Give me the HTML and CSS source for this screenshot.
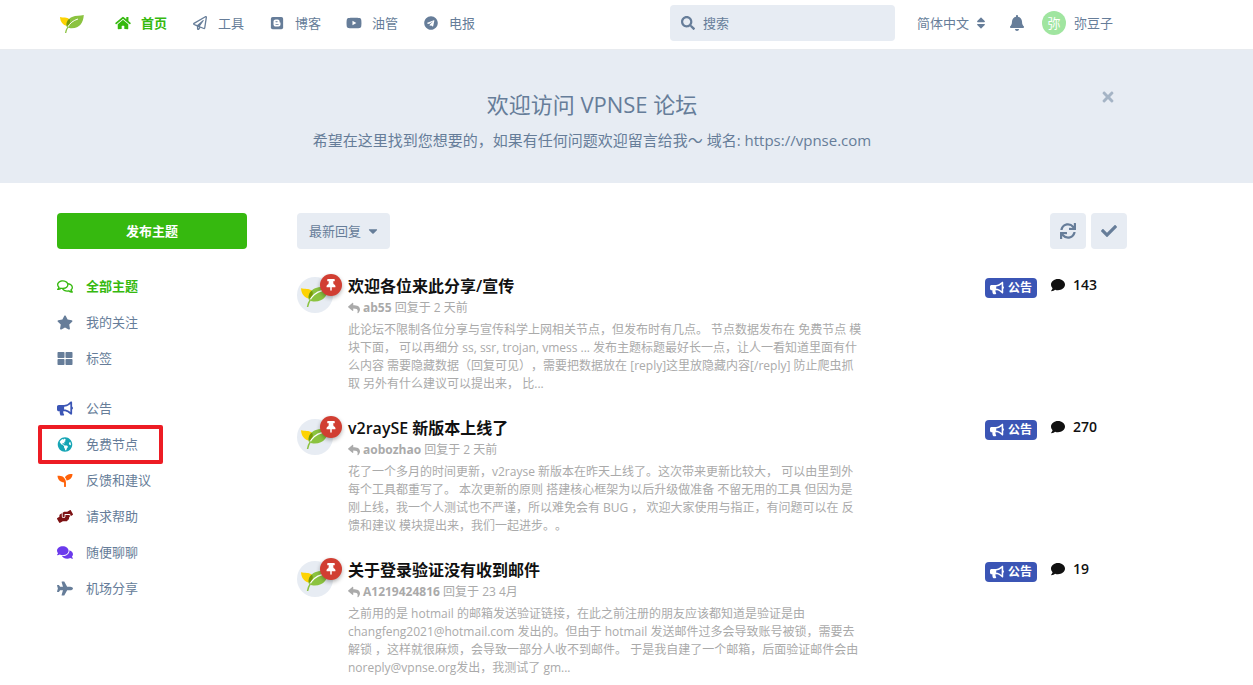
FILE: index.html
```
<!DOCTYPE html>
<html lang="zh-CN">
<head>
    <meta charset="UTF-8">
    <meta name="viewport" content="width=device-width, initial-scale=1.0">
    <title>VPNSE 论坛</title>
    <link rel="stylesheet" href="styles.css">
</head>
<body>
    <!-- Icon sprite -->
    <svg class="sprite" aria-hidden="true">
        <symbol id="leaf" viewBox="0 0 24 18">
            <path fill="#fdd303" d="M0 2C3 3 7 1.600 9.500 4.500L9 9L7 10.800C3 10.300.3 7 0 2z"/>
            <path fill="#8bc340" d="M23.800 0C23.300 8 19.500 13.800 10.500 13.200C9 13.100 7.800 12.700 6.800 12C5.600 8.500 7.600 3.800 12 1.900C16 .3 20 .8 23.800 0z"/>
            <path fill="#7a9a06" d="M6.800 11C6 8.500 7 5.500 9.300 3.800C10.600 5.500 10.300 8.500 8.500 10z"/>
            <path fill="none" stroke="#fff" stroke-width="1" d="M18 4C13.500 5.300 9.500 8.300 7.600 12.500"/>
            <path fill="none" stroke="#8bc340" stroke-width="1.300" d="M8.200 11.500C7 13.300 6 15.500 5.600 18"/>
        </symbol>
        <symbol id="home" viewBox="0 0 576 512"><path d="M280.37 148.26L96 300.11V464a16 16 0 0 0 16 16l112.06-.29a16 16 0 0 0 15.92-16V368a16 16 0 0 1 16-16h64a16 16 0 0 1 16 16v95.64a16 16 0 0 0 16 16.05L464 480a16 16 0 0 0 16-16V300L295.67 148.26a12.19 12.19 0 0 0-15.3 0zM571.6 251.47L488 182.56V44.05a12 12 0 0 0-12-12h-56a12 12 0 0 0-12 12v72.61L318.47 43a48 48 0 0 0-61 0L4.34 251.47a12 12 0 0 0-1.6 16.9l25.5 31A12 12 0 0 0 45.15 301l235.22-193.74a12.19 12.19 0 0 1 15.3 0L530.9 301a12 12 0 0 0 16.9-1.6l25.5-31a12 12 0 0 0-1.7-16.93z"/></symbol>
        <symbol id="paper-plane" viewBox="0 0 512 512"><path d="M440 6.5L24 246.4c-34.4 19.9-31.1 70.8 5.7 85.9L144 379.6V464c0 46.4 59.2 65.5 86.6 28.6l43.8-59.1 111.9 46.2c5.9 2.4 12.1 3.6 18.3 3.6 8.2 0 16.3-2.1 23.6-6.2 12.8-7.2 21.6-20 23.9-34.5l59.4-387.2c6.1-40.1-36.9-68.8-71.5-48.9zM192 464v-64.6l36.6 15.1L192 464zm212.6-28.7l-153.8-63.5L391 169.5c10.7-15.5-9.5-33.5-23.7-21.2L155.8 332.6 48 288 464 48l-59.4 387.3z"/></symbol>
        <symbol id="blogger" viewBox="0 0 448 512">
            <rect y="32" width="448" height="448" rx="64"/>
            <path fill="#fff" fill-rule="evenodd" d="M180 128h64c46 0 76 32 76 76v14c0 14 8 18 18 18s14 6 14 16v58c0 42-30 74-74 74H178c-46 0-82-32-82-76V204c0-44 36-76 84-76zm4 60c-26 0-26 36 0 36h48c26 0 26-36 0-36zm0 100c-26 0-26 36 0 36h84c26 0 26-36 0-36z"/>
        </symbol>
        <symbol id="youtube" viewBox="0 0 576 512"><path d="M549.655 124.083c-6.281-23.65-24.787-42.276-48.284-48.597C458.781 64 288 64 288 64S117.22 64 74.629 75.486c-23.497 6.322-42.003 24.947-48.284 48.597-11.412 42.867-11.412 132.305-11.412 132.305s0 89.438 11.412 132.305c6.281 23.65 24.787 41.5 48.284 47.821C117.22 448 288 448 288 448s170.78 0 213.371-11.486c23.497-6.321 42.003-24.171 48.284-47.821 11.412-42.867 11.412-132.305 11.412-132.305s0-89.438-11.412-132.305zm-317.51 213.508V175.185l142.739 81.205-142.739 81.201z"/></symbol>
        <symbol id="telegram" viewBox="0 0 496 512"><path d="M248 8C111 8 0 119 0 256s111 248 248 248 248-111 248-248S385 8 248 8zm121.8 169.9l-40.7 191.8c-3 13.6-11.1 16.9-22.4 10.5l-62-45.7-29.9 28.8c-3.3 3.3-6.1 6.1-12.5 6.1l4.4-63.1 114.9-103.8c5-4.4-1.1-6.9-7.7-2.5l-142 89.4-61.2-19.1c-13.3-4.2-13.6-13.3 2.8-19.7l239.1-92.2c11.1-4 20.8 2.7 17.2 19.5z"/></symbol>
        <symbol id="magnifier" viewBox="0 0 512 512"><path d="M505 442.7L405.3 343c-4.5-4.5-10.6-7-17-7H372c27.6-35.3 44-79.7 44-128C416 93.1 322.9 0 208 0S0 93.1 0 208s93.1 208 208 208c48.3 0 92.7-16.4 128-44v16.3c0 6.4 2.5 12.5 7 17l99.7 99.7c9.4 9.4 24.6 9.4 33.9 0l28.3-28.3c9.4-9.4 9.4-24.6.1-34zM208 336c-70.7 0-128-57.2-128-128 0-70.7 57.2-128 128-128 70.7 0 128 57.2 128 128 0 70.7-57.2 128-128 128z"/></symbol>
        <symbol id="sort" viewBox="0 0 320 512"><path d="M41 288h238c21.4 0 32.1 25.9 17 41L177 448c-9.4 9.4-24.6 9.4-33.9 0L24 329c-15.1-15.1-4.4-41 17-41zm255-105L177 64c-9.4-9.4-24.6-9.4-33.9 0L24 183c-15.1 15.1-4.4 41 17 41h238c21.4 0 32.1-25.9 17-41z"/></symbol>
        <symbol id="caret" viewBox="0 0 320 512"><path d="M31.3 192h257.3c17.8 0 26.7 21.5 14.1 34.1L174.1 354.8c-7.8 7.8-20.5 7.8-28.3 0L17.2 226.1C4.6 213.5 13.5 192 31.3 192z"/></symbol>
        <symbol id="bell" viewBox="0 0 448 512"><path d="M224 512c35.32 0 63.97-28.65 63.97-64H160.03c0 35.35 28.65 64 63.97 64zm215.39-149.71c-19.32-20.76-55.47-51.99-55.47-154.29 0-77.7-54.48-139.9-127.94-155.16V32c0-17.67-14.32-32-31.98-32s-31.98 14.33-31.98 32v20.84C118.56 68.1 64.08 130.3 64.08 208c0 102.3-36.15 133.53-55.47 154.29-6 6.45-8.66 14.16-8.61 21.71.11 16.4 12.98 32 32.1 32h383.8c19.12 0 32-15.6 32.1-32 .05-7.55-2.61-15.27-8.61-21.71z"/></symbol>
        <symbol id="times" viewBox="0 0 352 512"><path d="M242.72 256l100.07-100.07c12.28-12.28 12.28-32.19 0-44.48l-22.24-22.24c-12.28-12.28-32.19-12.28-44.48 0L176 189.28 75.93 89.21c-12.28-12.28-32.19-12.28-44.48 0L9.21 111.45c-12.28 12.28-12.28 32.19 0 44.48L109.28 256 9.21 356.07c-12.28 12.28-12.28 32.19 0 44.48l22.24 22.24c12.28 12.28 32.2 12.28 44.48 0L176 322.72l100.07 100.07c12.28 12.28 32.2 12.28 44.48 0l22.24-22.24c12.28-12.28 12.28-32.19 0-44.48L242.72 256z"/></symbol>
        <symbol id="comments-o" viewBox="0 0 576 512"><path d="M532 386.2c27.5-27.1 44-61.1 44-98.2 0-80-76.5-146.1-176.2-157.9C368.3 72.5 294.3 32 208 32 93.1 32 0 103.6 0 192c0 37 16.5 71 44 98.2-15.3 30.7-37.3 54.5-37.7 54.9-6.3 6.7-8.1 16.5-4.4 25 3.6 8.5 12 14 21.2 14 53.5 0 96.7-20.2 125.2-38.8 9.2 2.1 18.7 3.7 28.4 4.9C208.1 407.6 281.8 448 368 448c20.8 0 40.8-2.4 59.8-6.8C456.3 459.7 499.4 480 553 480c9.2 0 17.5-5.5 21.2-14 3.6-8.5 1.9-18.3-4.4-25-.4-.3-22.5-24.1-37.8-54.8zm-392.8-92.3L122.1 305c-14.1 9.1-28.5 16.3-43.1 21.4 2.7-4.7 5.4-9.7 8-14.8l15.5-31.1L77.7 256C64.2 242.6 48 220.7 48 192c0-60.7 73.3-112 160-112s160 51.3 160 112-73.3 112-160 112c-16.5 0-33-1.9-49-5.6l-19.8-4.5zM498.3 352l-24.7 24.4 15.5 31.1c2.6 5.1 5.3 10.1 8 14.8-14.6-5.1-29-12.3-43.1-21.4l-17.1-11.1-19.9 4.6c-16 3.7-32.5 5.6-49 5.6-54 0-102.2-20.1-131.3-49.7C338 339.5 416 272.9 416 192c0-3.4-.4-6.7-.7-10C479.7 196.5 528 238.8 528 288c0 28.7-16.2 50.6-29.7 64z"/></symbol>
        <symbol id="comments" viewBox="0 0 576 512"><path d="M416 192c0-88.4-93.1-160-208-160S0 103.6 0 192c0 34.3 14.1 65.9 38 92-13.4 30.2-35.5 54.2-35.8 54.5-2.2 2.3-2.8 5.7-1.5 8.7S4.8 352 8 352c36.6 0 66.9-12.3 88.7-25 32.2 15.7 70.3 25 111.3 25 114.9 0 208-71.6 208-160zm122 220c23.9-26 38-57.7 38-92 0-66.9-53.5-124.2-129.3-148.1.9 6.6 1.3 13.3 1.3 20.1 0 105.9-107.7 192-240 192-10.8 0-21.3-.8-31.7-1.9C207.8 439.6 281.8 480 368 480c41 0 79.1-9.2 111.3-25 21.8 12.7 52.1 25 88.7 25 3.2 0 6.1-1.9 7.3-4.8 1.3-2.9.7-6.3-1.5-8.7-.3-.3-22.4-24.2-35.8-54.5z"/></symbol>
        <symbol id="star" viewBox="0 0 576 512"><path d="M259.3 17.8L194 150.2 47.900 171.500c-26.200 3.800-36.700 36.100-17.700 54.600l105.700 103-25 145.500c-4.500 26.300 23.200 46 46.400 33.700L288 439.600l130.700 68.700c23.200 12.200 50.900-7.400 46.400-33.700l-25-145.500 105.700-103c19-18.500 8.500-50.800-17.700-54.600L382 150.200 316.700 17.800c-11.700-23.600-45.600-23.900-57.400 0z"/></symbol>
        <symbol id="th-large" viewBox="0 0 512 512"><path d="M296 32h192c13.255 0 24 10.745 24 24v160c0 13.255-10.745 24-24 24H296c-13.255 0-24-10.745-24-24V56c0-13.255 10.745-24 24-24zm-80 0H24C10.745 32 0 42.745 0 56v160c0 13.255 10.745 24 24 24h192c13.255 0 24-10.745 24-24V56c0-13.255-10.745-24-24-24zM0 296v160c0 13.255 10.745 24 24 24h192c13.255 0 24-10.745 24-24V296c0-13.255-10.745-24-24-24H24c-13.255 0-24 10.745-24 24zm296 184h192c13.255 0 24-10.745 24-24V296c0-13.255-10.745-24-24-24H296c-13.255 0-24 10.745-24 24v160c0 13.255 10.745 24 24 24z"/></symbol>
        <symbol id="bullhorn" viewBox="0 0 576 512"><path d="M576 240c0-23.63-12.95-44.04-32-55.12V32.01C544 23.26 537.02 0 512 0c-7.12 0-14.19 2.38-19.98 7.02l-85.03 68.03C364.28 109.19 310.66 128 256 128H64c-35.35 0-64 28.65-64 64v96c0 35.35 28.65 64 64 64h33.7c-1.39 10.48-2.18 21.14-2.18 32 0 39.77 9.26 77.35 25.56 110.94 5.19 10.69 16.52 17.06 28.4 17.06h74.28c26.05 0 41.69-29.84 25.9-50.56-16.4-21.52-26.15-48.36-26.15-77.44 0-11.11 1.62-21.79 4.41-32H256c54.66 0 108.28 18.81 150.98 52.95l85.03 68.03a32.023 32.023 0 0 0 19.98 7.02c24.92 0 32-22.78 32-32V295.13C563.05 284.04 576 263.63 576 240zm-96 141.42l-33.05-26.44C392.95 311.78 325.12 288 256 288v-96c69.12 0 136.95-23.78 190.95-66.98L480 98.58v282.84z"/></symbol>
        <symbol id="globe" viewBox="0 0 496 512"><path d="M248 8C111.03 8 0 119.03 0 256s111.03 248 248 248 248-111.03 248-248S384.97 8 248 8zm82.29 357.6c-3.9 3.88-7.99 7.95-11.31 11.28-2.99 3-5.1 6.7-6.17 10.71-1.51 5.66-2.73 11.38-4.77 16.87l-17.39 46.85c-13.76 3-28 4.69-42.65 4.69v-27.38c1.69-12.62-7.64-36.26-22.63-51.25-6-6-9.37-14.14-9.37-22.63v-32.01c0-11.64-6.27-22.34-16.46-27.97-14.37-7.95-34.81-19.06-48.81-26.11-11.48-5.78-22.1-13.14-31.65-21.75l-.8-.72a114.792 114.792 0 0 1-18.06-20.74c-9.38-13.77-24.66-36.42-34.59-51.14 20.47-45.5 57.36-82.04 103.2-101.89l24.01 12.01C203.48 89.74 216 82.01 216 70.11v-11.3c7.99-1.29 16.12-2.11 24.39-2.42l28.3 28.3c6.25 6.25 6.25 16.38 0 22.63L264 112l-10.34 10.34c-3.12 3.12-3.12 8.19 0 11.31l4.69 4.69c3.12 3.12 3.12 8.19 0 11.31l-8 8a8.008 8.008 0 0 1-5.66 2.34h-8.99c-2.08 0-4.08.81-5.58 2.27l-9.92 9.65a8.001 8.001 0 0 0-1.58 9.31l15.59 31.19c2.66 5.32-1.21 11.58-7.15 11.58h-5.64c-1.93 0-3.79-.7-5.24-1.96l-9.28-8.06a16.017 16.017 0 0 0-15.55-3.1l-31.17 10.39a11.95 11.95 0 0 0-8.17 11.34c0 4.53 2.56 8.66 6.61 10.69l11.08 5.54c9.41 4.71 19.79 7.16 30.31 7.16s22.59 27.29 32 32h66.75c8.49 0 16.62 3.37 22.63 9.37l13.69 13.69a30.503 30.503 0 0 1 8.93 21.57 46.536 46.536 0 0 1-13.72 32.98zM417 274.25c-5.79-1.45-10.84-5-14.15-9.97l-17.98-26.97a23.97 23.97 0 0 1 0-26.62l19.59-29.38c2.32-3.47 5.5-6.29 9.24-8.15l12.98-6.49C440.2 193.59 448 223.87 448 256c0 8.67-.74 17.16-1.82 25.54L417 274.25z"/></symbol>
        <symbol id="seedling" viewBox="0 0 512 512"><path d="M64 96H0c0 123.7 100.3 224 224 224v144c0 8.8 7.2 16 16 16h32c8.8 0 16-7.2 16-16V320C288 196.3 187.7 96 64 96zm384-64c-84.2 0-157.4 46.5-195.7 115.2 27.7 30.2 48.2 66.9 59 107.6C424 243.1 512 147.9 512 32h-64z"/></symbol>
        <symbol id="hands" viewBox="0 0 640 512"><path d="M488 192H336v56c0 39.7-32.3 72-72 72s-72-32.3-72-72V126.4l-64.9 39C107.8 176.9 96 197.8 96 220.2v47.3l-80 46.2C.7 322.5-4.6 342.1 4.3 357.4l80 138.6c8.8 15.3 28.4 20.5 43.7 11.7L231.4 448H368c35.3 0 64-28.7 64-64h16c17.7 0 32-14.3 32-32v-64h8c13.3 0 24-10.7 24-24v-48c0-13.3-10.7-24-24-24zm147.7-37.4L555.7 16C546.9.7 527.3-4.5 512 4.3L408.6 64H306.4c-12 0-23.7 3.4-33.9 9.7L239 94.6c-9.4 5.8-15 16.1-15 27.1V248c0 22.1 17.9 40 40 40s40-17.900 40-40v-88h184c30.900 0 56 25.100 56 56v28.500l80-46.200c15.300-8.900 20.500-28.400 11.700-43.700z"/></symbol>
        <symbol id="plane" viewBox="0 0 576 512"><path d="M480 192H365.71L260.61 8.06A16.014 16.014 0 0 0 246.71 0h-65.5c-10.63 0-18.3 10.17-15.38 20.39L214.86 192H112l-43.2-57.6c-3.02-4.03-7.77-6.4-12.8-6.4H16.01C5.6 128-2.04 137.78.49 147.88L32 256 .49 364.12C-2.04 374.22 5.6 384 16.01 384H56c5.04 0 9.78-2.37 12.8-6.4L112 320h102.86l-49.03 171.6c-2.92 10.22 4.75 20.4 15.38 20.4h65.5c5.74 0 11.04-3.08 13.89-8.06L365.71 320H480c35.35 0 96-28.65 96-64s-60.65-64-96-64z"/></symbol>
        <symbol id="thumbtack" viewBox="0 0 384 512"><path d="M298.028 214.267L285.793 96H328c13.255 0 24-10.745 24-24V24c0-13.255-10.745-24-24-24H56C42.745 0 32 10.745 32 24v48c0 13.255 10.745 24 24 24h42.207L85.972 214.267C37.465 236.82 0 277.261 0 328c0 13.255 10.745 24 24 24h136v104.007c0 1.242.289 2.467.845 3.578l24 48c2.941 5.882 11.364 5.893 14.311 0l24-48a8.008 8.008 0 0 0 .845-3.578V352h136c13.255 0 24-10.745 24-24-.001-51.183-37.983-91.42-85.973-113.733z"/></symbol>
        <symbol id="reply" viewBox="0 0 512 512"><path d="M8.309 189.836L184.313 37.851C199.719 24.546 224 35.347 224 56.015v80.053c160.629 1.839 288 34.032 288 186.258 0 61.441-39.581 122.309-83.333 154.132-13.653 9.931-33.111-2.533-28.077-18.631 45.344-145.012-21.507-183.51-176.59-185.742V360c0 20.7-24.3 31.453-39.687 18.164l-176.004-152c-11.071-9.562-11.086-26.753 0-36.328z"/></symbol>
        <symbol id="comment" viewBox="0 0 512 512"><path d="M256 32C114.6 32 0 125.1 0 240c0 49.6 21.4 95 57 130.7C44.5 421.1 2.7 466 2.2 466.5c-2.2 2.3-2.8 5.7-1.5 8.7S4.8 480 8 480c66.3 0 116-31.8 140.6-51.4 32.7 12.3 69 19.4 107.4 19.4 141.4 0 256-93.1 256-208S397.4 32 256 32z"/></symbol>
        <symbol id="check" viewBox="0 0 512 512"><path d="M173.898 439.404l-166.4-166.4c-9.997-9.997-9.997-26.206 0-36.204l36.203-36.204c9.997-9.998 26.207-9.998 36.204 0L192 312.69 432.095 72.596c9.997-9.997 26.207-9.997 36.204 0l36.203 36.204c9.997 9.997 9.997 26.206 0 36.204l-294.4 294.401c-9.998 9.997-26.207 9.997-36.204-.001z"/></symbol>
        <symbol id="sync" viewBox="0 0 512 512"><path d="M440.65 12.57l4 82.77A247.16 247.16 0 0 0 255.83 8C134.73 8 33.91 94.92 12.29 209.82A12 12 0 0 0 24.09 224h49.05a12 12 0 0 0 11.67-9.26 175.91 175.91 0 0 1 317-56.94l-101.46-4.86a12 12 0 0 0-12.57 12v47.41a12 12 0 0 0 12 12H500a12 12 0 0 0 12-12V12a12 12 0 0 0-12-12h-47.37a12 12 0 0 0-11.98 12.57zM255.83 432a175.61 175.61 0 0 1-146-77.8l101.8 4.87a12 12 0 0 0 12.57-12v-47.4a12 12 0 0 0-12-12H12a12 12 0 0 0-12 12V500a12 12 0 0 0 12 12h47.35a12 12 0 0 0 12-12.6l-4.15-82.57A247.17 247.17 0 0 0 255.83 504c121.11 0 221.93-86.92 243.55-201.82a12 12 0 0 0-11.8-14.18h-49.05a12 12 0 0 0-11.67 9.26A175.86 175.86 0 0 1 255.83 432z"/></symbol>
    </svg>

    <header class="header container">
        <a href="#" class="logo" aria-label="VPNSE"><svg><use href="#leaf"/></svg></a>
        <nav class="header-nav">
            <a href="#" class="active"><svg class="icon"><use href="#home"/></svg>首页</a>
            <a href="#"><svg class="icon"><use href="#paper-plane"/></svg>工具</a>
            <a href="#"><svg class="icon"><use href="#blogger"/></svg>博客</a>
            <a href="#"><svg class="icon"><use href="#youtube"/></svg>油管</a>
            <a href="#"><svg class="icon"><use href="#telegram"/></svg>电报</a>
        </nav>
        <div class="header-controls">
            <div class="search">
                <svg class="icon"><use href="#magnifier"/></svg>
                <input type="search" placeholder="搜索" aria-label="搜索">
            </div>
            <button class="language">简体中文 <svg class="icon"><use href="#sort"/></svg></button>
            <button class="bell" aria-label="通知"><svg class="icon"><use href="#bell"/></svg></button>
            <button class="user"><span class="user-avatar">弥</span>弥豆子</button>
        </div>
    </header>

    <section class="hero">
        <div class="container hero-inner">
            <h2>欢迎访问 VPNSE 论坛</h2>
            <p>希望在这里找到您想要的，如果有任何问题欢迎留言给我～ 域名: https://vpnse.com</p>
            <button class="hero-close" aria-label="关闭"><svg class="icon"><use href="#times"/></svg></button>
        </div>
    </section>

    <div class="container page">
        <aside class="sidebar">
            <button class="new-topic">发布主题</button>
            <nav class="side-nav">
                <a href="#" class="active"><svg class="icon"><use href="#comments-o"/></svg>全部主题</a>
                <a href="#"><svg class="icon"><use href="#star"/></svg>我的关注</a>
                <a href="#"><svg class="icon"><use href="#th-large"/></svg>标签</a>
            </nav>
            <nav class="side-nav">
                <a href="#"><svg class="icon blue"><use href="#bullhorn"/></svg>公告</a>
                <a href="#" class="marked"><svg class="icon teal"><use href="#globe"/></svg>免费节点</a>
                <a href="#"><svg class="icon orange"><use href="#seedling"/></svg>反馈和建议</a>
                <a href="#"><svg class="icon maroon"><use href="#hands"/></svg>请求帮助</a>
                <a href="#"><svg class="icon purple"><use href="#comments"/></svg>随便聊聊</a>
                <a href="#"><svg class="icon"><use href="#plane"/></svg>机场分享</a>
            </nav>
        </aside>

        <main class="content">
            <div class="toolbar">
                <button class="sort-btn">最新回复 <svg class="icon"><use href="#caret"/></svg></button>
                <div class="toolbar-actions">
                    <button class="icon-btn" aria-label="刷新"><svg class="icon"><use href="#sync"/></svg></button>
                    <button class="icon-btn" aria-label="全部标为已读"><svg class="icon"><use href="#check"/></svg></button>
                </div>
            </div>

            <ul class="topics">
                <li class="topic">
                    <a href="#" class="avatar" aria-label="VPNSE"><svg class="avatar-leaf"><use href="#leaf"/></svg><span class="pin"><svg class="icon"><use href="#thumbtack"/></svg></span></a>
                    <div class="topic-main">
                        <h3><a href="#">欢迎各位来此分享/宣传</a></h3>
                        <div class="topic-info"><svg class="icon"><use href="#reply"/></svg><b>ab55</b> 回复于 2 天前</div>
                        <p>此论坛不限制各位分享与宣传科学上网相关节点，但发布时有几点。 节点数据发布在 免费节点 模<br>块下面， 可以再细分 ss, ssr, trojan, vmess ... 发布主题标题最好长一点，让人一看知道里面有什<br>么内容 需要隐藏数据（回复可见），需要把数据放在 [reply]这里放隐藏内容[/reply] 防止爬虫抓<br>取 另外有什么建议可以提出来， 比...</p>
                    </div>
                    <a href="#" class="tag"><svg class="icon"><use href="#bullhorn"/></svg>公告</a>
                    <span class="count"><svg class="icon"><use href="#comment"/></svg>143</span>
                </li>
                <li class="topic">
                    <a href="#" class="avatar" aria-label="VPNSE"><svg class="avatar-leaf"><use href="#leaf"/></svg><span class="pin"><svg class="icon"><use href="#thumbtack"/></svg></span></a>
                    <div class="topic-main">
                        <h3><a href="#">v2raySE 新版本上线了</a></h3>
                        <div class="topic-info"><svg class="icon"><use href="#reply"/></svg><b>aobozhao</b> 回复于 2 天前</div>
                        <p>花了一个多月的时间更新，v2rayse 新版本在昨天上线了。这次带来更新比较大， 可以由里到外<br>每个工具都重写了。 本次更新的原则 搭建核心框架为以后升级做准备 不留无用的工具 但因为是<br>刚上线，我一个人测试也不严谨，所以难免会有 BUG ， 欢迎大家使用与指正，有问题可以在 反<br>馈和建议 模块提出来，我们一起进步。。</p>
                    </div>
                    <a href="#" class="tag"><svg class="icon"><use href="#bullhorn"/></svg>公告</a>
                    <span class="count"><svg class="icon"><use href="#comment"/></svg>270</span>
                </li>
                <li class="topic">
                    <a href="#" class="avatar" aria-label="VPNSE"><svg class="avatar-leaf"><use href="#leaf"/></svg><span class="pin"><svg class="icon"><use href="#thumbtack"/></svg></span></a>
                    <div class="topic-main">
                        <h3><a href="#">关于登录验证没有收到邮件</a></h3>
                        <div class="topic-info"><svg class="icon"><use href="#reply"/></svg><b>A1219424816</b> 回复于 23 4月</div>
                        <p>之前用的是 hotmail 的邮箱发送验证链接，在此之前注册的朋友应该都知道是验证是由<br>changfeng2021@hotmail.com 发出的。但由于 hotmail 发送邮件过多会导致账号被锁，需要去<br>解锁 ，这样就很麻烦，会导致一部分人收不到邮件。 于是我自建了一个邮箱，后面验证邮件会由<br>noreply@vpnse.org发出，我测试了 gm...</p>
                    </div>
                    <a href="#" class="tag"><svg class="icon"><use href="#bullhorn"/></svg>公告</a>
                    <span class="count"><svg class="icon"><use href="#comment"/></svg>19</span>
                </li>
            </ul>
        </main>
    </div>
</body>
</html>
```
FILE: styles.css
```
*,
*::after {
    box-sizing: border-box;
}

body {
    margin: 0;
    font-family: "Open Sans", "Noto Sans CJK SC", sans-serif;
    font-size: 13px;
    line-height: 20px;
    text-spacing-trim: space-all;
    color: #667d99;
    background-color: #fff;
}

a {
    color: inherit;
    text-decoration: none;
}

button {
    display: flex;
    align-items: center;
    padding: 0;
    border: none;
    background: none;
    color: inherit;
    font: inherit;
    cursor: pointer;
}

.sprite {
    display: none;
}

.icon {
    flex: none;
    width: 16px;
    height: 14px;
    fill: currentColor;
}

.container {
    padding-left: 57px;
    padding-right: 126px;
}

/* Header */
.header {
    display: flex;
    align-items: center;
    height: 50px;
    padding-bottom: 4px;
    border-bottom: 1px solid #e8ebef;
}

.logo {
    margin: 2px 31px 0 3px;
}

.logo svg {
    display: block;
    width: 24px;
    height: 18px;
}

.header-nav {
    display: flex;
    gap: 25px;
}

.header-nav a {
    display: flex;
    align-items: center;
    gap: 10px;
}

.active {
    color: #36b90f;
    font-weight: bold;
}

.header-controls {
    display: flex;
    align-items: center;
    margin-left: auto;
    padding-right: 14px;
}

.search {
    display: flex;
    align-items: center;
    gap: 7px;
    width: 225px;
    height: 36px;
    margin-right: 22px;
    padding: 0 10px;
    border-radius: 4px;
    background-color: #e7ecf3;
}

.search input {
    flex: 1;
    min-width: 0;
    padding: 0;
    border: none;
    outline: none;
    background: none;
    color: inherit;
    font: inherit;
}

.search input::placeholder {
    color: #667d99;
    opacity: 1;
}

.language {
    gap: 4px;
    margin-right: 20px;
}

.bell {
    margin-right: 17px;
}

.bell .icon {
    height: 16px;
}

.user {
    gap: 8px;
}

.user-avatar {
    width: 24px;
    height: 24px;
    border-radius: 50%;
    background-color: #a0e5a0;
    color: #fff;
    line-height: 24px;
    text-align: center;
}

/* Welcome banner */
.hero {
    background-color: #e7ecf3;
    text-align: center;
}

.hero-inner {
    position: relative;
    padding-top: 38px;
    padding-bottom: 31px;
}

.hero h2 {
    margin: 0 0 8px;
    font-size: 22px;
    font-weight: normal;
    line-height: 32px;
}

.hero p {
    margin: 0;
    font-size: 15px;
    line-height: 24px;
}

.hero-close {
    position: absolute;
    top: 39px;
    right: 137px;
    opacity: 0.5;
}

.hero-close .icon {
    height: 16px;
}

/* Page */
.page {
    display: flex;
    gap: 50px;
    padding-top: 30px;
}

.sidebar {
    flex: none;
    width: 190px;
}

.new-topic {
    justify-content: center;
    width: 100%;
    height: 36px;
    margin-bottom: 19px;
    border-radius: 4px;
    background-color: #36b90f;
    color: #fff;
    font-weight: bold;
}

.side-nav {
    margin-bottom: 14px;
}

.side-nav a {
    position: relative;
    display: flex;
    align-items: center;
    gap: 13px;
    height: 36px;
}

.side-nav .icon {
    height: 15px;
}

/* Red frame round the highlighted entry */
.marked::after {
    content: "";
    position: absolute;
    top: -1px;
    left: -19px;
    width: 125px;
    height: 39px;
    border: 4px solid #ed1c24;
    border-radius: 2px;
}

.blue {
    color: #3b55b5;
}

.teal {
    color: #16a5b5;
}

.orange {
    color: #ff6108;
}

.maroon {
    color: #7d1214;
}

.purple {
    color: #6b3aec;
}

.content {
    flex: 1;
    min-width: 0;
}

.toolbar {
    display: flex;
    justify-content: space-between;
    margin-bottom: 25px;
}

.toolbar-actions {
    display: flex;
    gap: 5px;
}

.sort-btn,
.icon-btn {
    height: 36px;
    border-radius: 4px;
    background-color: #e7ecf3;
}

.sort-btn {
    gap: 4px;
    padding: 0 9px 0 12px;
}

.icon-btn {
    justify-content: center;
    width: 36px;
}

.icon-btn .icon {
    height: 16px;
}

/* Topic list */
.topics {
    margin: 0;
    padding: 0;
    list-style: none;
}

.topic {
    display: flex;
    align-items: flex-start;
    margin-bottom: 23px;
}

.avatar {
    position: relative;
    display: flex;
    align-items: center;
    justify-content: center;
    flex: none;
    width: 36px;
    height: 36px;
    margin: 3px 15px 0 0;
    padding-top: 3px;
    border-radius: 50%;
    background-color: #e7ecf3;
}

.avatar-leaf {
    width: 28px;
    height: 21px;
}

.pin {
    position: absolute;
    top: -3px;
    right: -9px;
    display: flex;
    align-items: center;
    justify-content: center;
    width: 22px;
    height: 22px;
    border-radius: 50%;
    background-color: #d13e32;
    box-shadow: 0 2px 4px rgba(0, 0, 0, 0.3);
    color: #fff;
}

.pin .icon {
    height: 12px;
}

.topic-main {
    flex: 1;
    min-width: 0;
    color: #aaa;
    font-size: 12px;
    line-height: 18px;
    white-space: nowrap;
}

.topic-main h3 {
    margin: 0 0 1px;
    color: #111;
    font-size: 16px;
    font-weight: 600;
    line-height: 24px;
}

.topic-info .icon {
    width: 12px;
    height: 12px;
    margin-right: 3px;
    vertical-align: -2px;
}

.topic-main p {
    margin: 4px 0 0;
}

.tag {
    display: flex;
    align-items: center;
    gap: 4px;
    height: 20px;
    margin: 4px 14px 0 0;
    padding: 0 5px;
    border-radius: 4px;
    background-color: #3b55b5;
    color: #fff;
    font-size: 12px;
    font-weight: bold;
}

.tag .icon,
.count .icon {
    width: 14px;
    height: 14px;
}

.count {
    display: flex;
    align-items: center;
    gap: 8px;
    width: 76px;
    color: #111;
    font-size: 14px;
    font-weight: 600;
    line-height: 22px;
}
```
